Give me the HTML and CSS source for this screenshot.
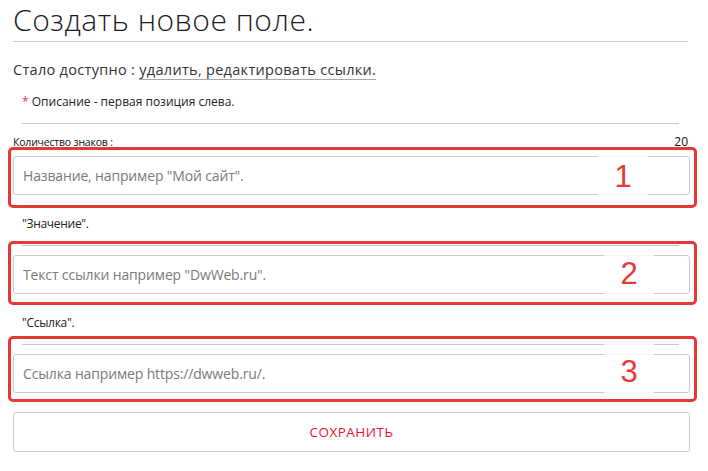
FILE: index.html
```html
<!DOCTYPE html>
<html lang="ru">
<head>
<meta charset="utf-8">
<title>Создать новое поле</title>
<link rel="stylesheet" href="styles.css">
</head>
<body>
<div class="page">
  <h1 class="title">Создать новое поле.</h1>
  <hr class="rule rule-title">
  <p class="lead">Стало доступно : <span class="lead-link">удалить, редактировать ссылки.</span></p>
  <p class="note"><span class="star">*</span> Описание - первая позиция слева.</p>
  <hr class="rule rule-inner rule-note">
  <div class="counter">
    <span class="counter-label">Количество знаков :</span>
    <span class="counter-value">20</span>
  </div>
  <div class="group group-1">
    <input class="field" type="text" placeholder="Название, например &quot;Мой сайт&quot;.">
    <span class="mark">1</span>
    <span class="frame"></span>
  </div>
  <p class="caption">"Значение".</p>
  <div class="group group-2">
    <hr class="rule rule-inner">
    <input class="field" type="text" placeholder="Текст ссылки например &quot;DwWeb.ru&quot;.">
    <span class="mark">2</span>
    <span class="frame"></span>
  </div>
  <p class="caption">"Ссылка".</p>
  <div class="group group-3">
    <hr class="rule rule-inner">
    <input class="field" type="text" placeholder="Ссылка например https://dwweb.ru/.">
    <span class="mark">3</span>
    <span class="frame"></span>
  </div>
  <button class="save" type="button">СОХРАНИТЬ</button>
</div>
</body>
</html>
```
FILE: styles.css
```css
* { box-sizing: border-box; }
html, body { margin: 0; padding: 0; background: #fff; }
body {
  font-family: "Open Sans", "Noto Sans", sans-serif;
  color: #333;
}
.page {
  width: 677px;
  margin-left: 13px;
  display: flex;
  flex-direction: column;
}
.title {
  margin: 0;
  font-family: "Open Sans", sans-serif;
  font-weight: 300;
  font-size: 30px;
  line-height: 40px;
  color: #1c1c1c;
  letter-spacing: 0.55px;
}
.rule {
  border: 0;
  height: 1px;
  background: #c8c8c8;
  margin: 0;
}
.rule-title { margin: 1px 2px 0 0; }
.rule-inner { margin-left: 9px; margin-right: 11px; }
.lead {
  margin: 18px 0 0;
  font-size: 14.5px;
  line-height: 20px;
  color: #333;
  letter-spacing: 0.3px;
}
.lead-link {
  border-bottom: 1px solid #a8a8a8;
}
.note {
  margin: 14px 0 0 9px;
  font-size: 12px;
  line-height: 16px;
  color: #222;
}
.star { color: #e53935; }
.rule-note { margin-top: 13px; }
.counter {
  margin-top: 11px;
  display: flex;
  justify-content: space-between;
  font-size: 10.5px;
  line-height: 14px;
  color: #111;
  padding-right: 2px;
}
.counter-label { letter-spacing: -0.2px; }
.counter-value { font-size: 12px; }
.group {
  position: relative;
  display: flex;
  flex-direction: column;
}
.group-1 { margin-top: 7px; }
.field {
  display: block;
  width: 100%;
  height: 39px;
  margin: 0;
  padding: 0 9px;
  border: 1px solid #cacaca;
  border-radius: 3px;
  font-family: "Open Sans", sans-serif;
  font-size: 14px;
  letter-spacing: -0.15px;
  color: #555;
  background: #fff;
  outline: none;
}
.field::placeholder { color: #7a7a7a; opacity: 1; }
.group-2 .field, .group-3 .field { margin-top: 9px; }
.caption {
  margin: 21px 0 0 9px;
  font-size: 12px;
  line-height: 16px;
  color: #222;
  letter-spacing: -0.3px;
}
.group-2, .group-3 { margin-top: 13px; }
.mark {
  position: absolute;
  width: 50px;
  bottom: -1px;
  background: rgba(255, 255, 255, 0.82);
  font-family: "Liberation Sans", Arial, sans-serif;
  font-size: 31px;
  line-height: 28px;
  color: #e53935;
  text-align: center;
  padding: 8px 0 6px;
}
.group-1 .mark { right: 42px; top: -1px; padding-top: 8px; }
.group-2 .mark { right: 36px; top: 9px; padding-top: 6px; }
.group-3 .mark { right: 36px; top: -1px; padding-top: 15px; }
.frame {
  position: absolute;
  left: -5px;
  right: -7px;
  border: 3px solid #e53935;
  border-radius: 5px;
  pointer-events: none;
}
.group-1 .frame { top: -9px; bottom: -13px; }
.group-2 .frame { top: -4px; bottom: -11px; }
.group-3 .frame { top: -8px; bottom: -9px; }
.save {
  margin-top: 19px;
  height: 40px;
  width: 100%;
  border: 1px solid #cacaca;
  border-radius: 3px;
  background: #fff;
  font-family: "Open Sans", sans-serif;
  font-size: 13.5px;
  color: #ee1133;
  letter-spacing: 0.5px;
  cursor: pointer;
}
```
